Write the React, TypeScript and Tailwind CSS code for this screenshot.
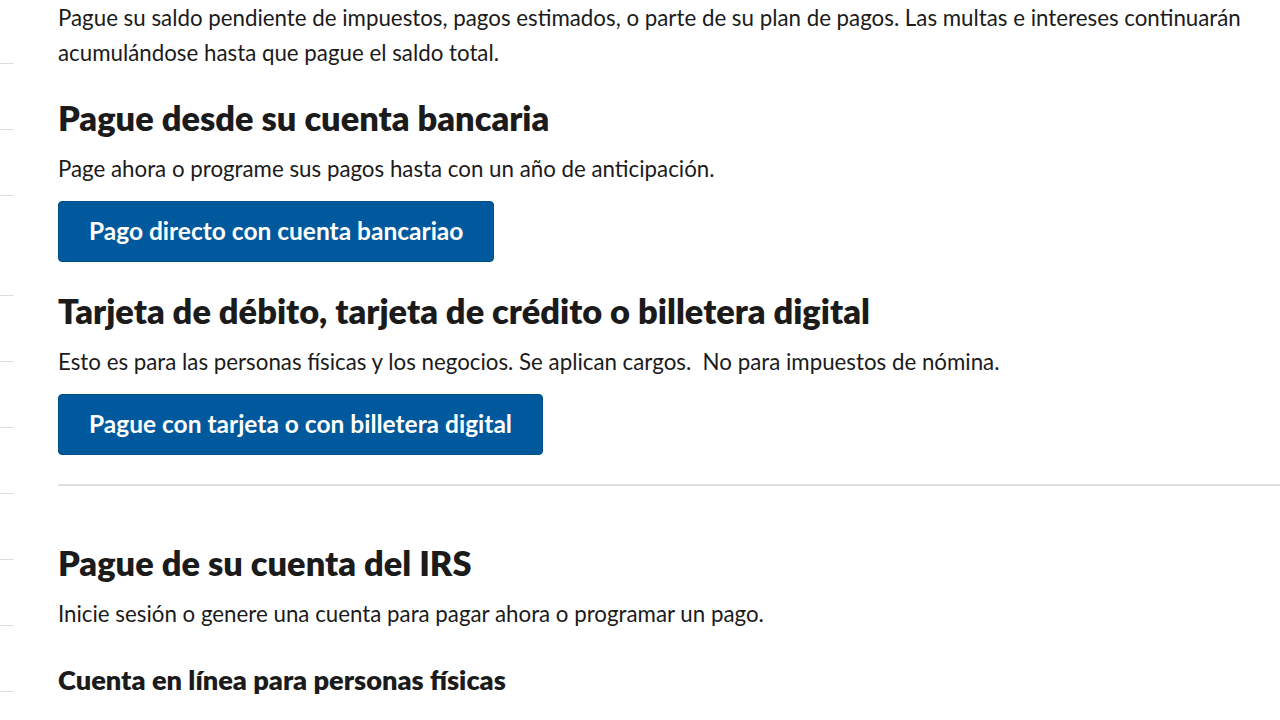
import React from 'react';

const navHeights = [64, 66, 66, 100, 66, 66, 66, 66, 66, 66];

function PayButton({ label }: { label: string }) {
  return (
    <button className="h-[61px] self-start rounded-[4px] border border-[#004f8b] bg-[#00599c] px-[30px] text-[24.5px] font-bold leading-none text-white">
      {label}
    </button>
  );
}

export default function App() {
  return (
    <div className="flex h-[720px] w-[1280px] overflow-hidden bg-white font-['Lato','Noto_Sans',sans-serif] text-[#1b1b1b]">
      {/* sidebar (cut off at left edge) */}
      <div className="flex w-[14px] shrink-0 flex-col">
        {navHeights.map((h, i) => (
          <div key={i} style={{ height: h }} className="shrink-0 border-b-[1.5px] border-[#dcdee0]" />
        ))}
      </div>

      <main className="flex min-w-0 flex-1 flex-col pl-[44px]">
        <p className="pr-[30px] text-[22.3px] leading-[35px]">
          Pague su saldo pendiente de impuestos, pagos estimados, o parte de su plan de pagos. Las multas e intereses continuarán acumulándose hasta que pague el saldo total.
        </p>

        <h2 className="mt-[28px] text-[34.4px] font-extrabold leading-[40px]">Pague desde su cuenta bancaria</h2>
        <p className="mt-[13px] text-[22.3px] leading-[35px]">Page ahora o programe sus pagos hasta con un año de anticipación.</p>
        <div className="mt-[15px] flex">
          <PayButton label="Pago directo con cuenta bancariao" />
        </div>

        <h2 className="mt-[29px] text-[34.4px] font-extrabold leading-[40px]">Tarjeta de débito, tarjeta de crédito o billetera digital</h2>
        <p className="mt-[13px] whitespace-pre text-[22.3px] leading-[35px]">Esto es para las personas físicas y los negocios. Se aplican cargos.  No para impuestos de nómina.</p>
        <div className="mt-[15px] flex">
          <PayButton label="Pague con tarjeta o con billetera digital" />
        </div>

        <hr className="mt-[29px] w-[calc(100%+20px)] border-t-2 border-[#dfe1e2]" />

        <h2 className="mt-[57px] text-[34.4px] font-extrabold leading-[40px]">Pague de su cuenta del IRS</h2>
        <p className="mt-[13px] text-[22.3px] leading-[35px]">Inicie sesión o genere una cuenta para pagar ahora o programar un pago.</p>

        <h3 className="mt-[33px] text-[27.2px] font-extrabold leading-[32px]">Cuenta en línea para personas físicas</h3>
      </main>
    </div>
  );
}
